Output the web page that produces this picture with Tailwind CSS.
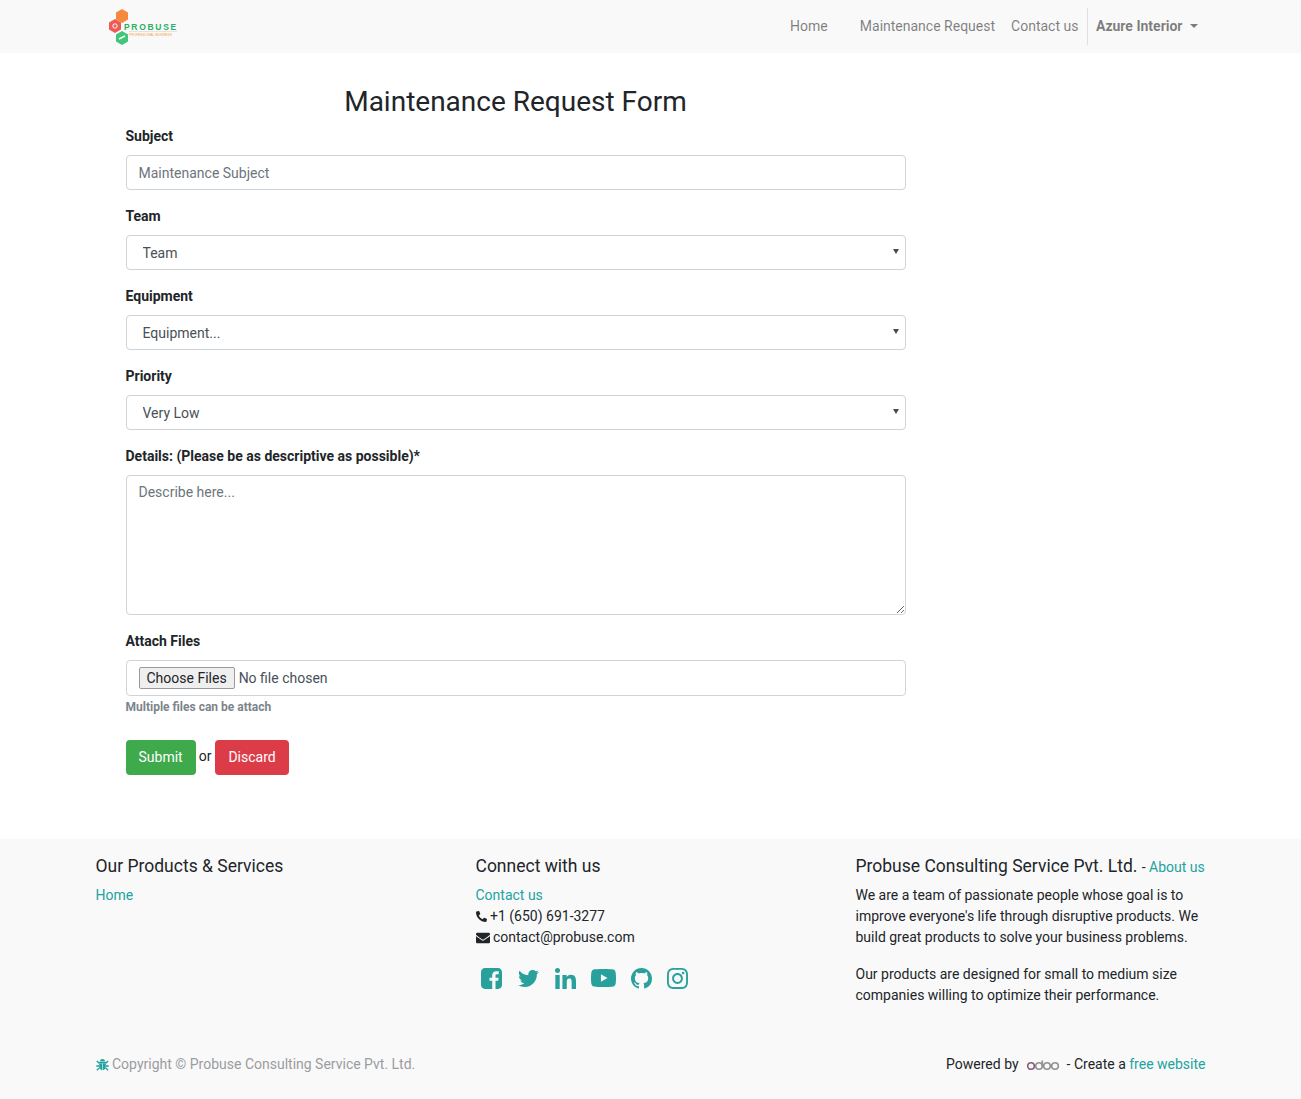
<!DOCTYPE html>
<html lang="en">
  <head>
    <meta charset="UTF-8" />
    <meta name="viewport" content="width=device-width, initial-scale=1.0" />
    <title>Maintenance Request Form</title>
    <script src="https://cdn.jsdelivr.net/npm/@tailwindcss/browser@4"></script>
  </head>
  <body class="bg-white text-[#212529] font-['Roboto',sans-serif] text-[14px] leading-[21px]">
    <header class="bg-[#f9f9f9] h-[53px]">
      <div class="w-[1110px] mx-auto h-full flex items-center justify-between">
        <svg class="ml-[12px] w-[72px] h-[38px]" viewBox="0 0 72 38">
          <polygon points="14,1 20,4.5 20,11.5 14,15 8,11.5 8,4.5" fill="#f58a3c" />
          <polygon points="7,11 13,14.5 13,21.5 7,25 1,21.5 1,14.5" fill="#ef5a55" />
          <polygon points="14,23 20,26.5 20,33.5 14,37 8,33.5 8,26.5" fill="#3fc67a" />
          <circle cx="7" cy="18" r="2.2" fill="none" stroke="#fff" stroke-width="1" />
          <path d="M11 31l6-3" stroke="#fff" stroke-width="1.5" />
          <path d="M21 23.5h48" stroke="#ddd" stroke-width="0.8" />
          <text x="16" y="22" font-family="Liberation Sans" font-weight="700" font-size="8.5" letter-spacing="1.7" fill="#2bae66">PROBUSE</text>
          <text x="21" y="27.5" font-family="Liberation Sans" font-size="3.3" fill="#f5a340">PROFESSIONAL BUSINESS</text>
        </svg>
        <nav class="flex items-center h-[37px] text-black/50">
          <a class="mr-[32px]">Home</a>
          <a class="mr-[16px]">Maintenance Request</a>
          <a class="pr-[8.5px] border-r border-black/10 h-full flex items-center">Contact us</a>
          <a class="pl-[8px] pr-[8px] flex items-center font-bold">Azure Interior<span class="ml-[7px] -mt-[1px] border-t-[4px] border-x-[4px] border-x-transparent border-t-black/50"></span></a>
        </nav>
      </div>
    </header>

    <main class="w-[1110px] mx-auto pl-[30px] pt-[32px] h-[786px]">
      <form class="w-[780px]">
        <h2 class="text-[28px] leading-[33px] text-center mb-[8px] font-normal">Maintenance Request Form</h2>
        <div class="mb-4">
          <label class="block mb-2 font-bold">Subject</label>
          <input type="text" placeholder="Maintenance Subject" class="block w-full h-[35px] px-3 pt-[1px] border border-[#ced4da] rounded-[4px] placeholder:text-[#6c757d]" />
        </div>
        <div class="mb-4">
          <label class="block mb-2 font-bold">Team</label>
          <div class="relative">
            <select class="block w-full h-[35px] pl-4 pt-[1px] border border-[#ced4da] rounded-[4px] bg-white text-[#495057] appearance-none"><option>Team</option></select>
            <span class="absolute right-[7px] top-[14px] border-t-[5px] border-x-[3px] border-x-transparent border-t-[#444b53]"></span>
          </div>
        </div>
        <div class="mb-4">
          <label class="block mb-2 font-bold">Equipment</label>
          <div class="relative">
            <select class="block w-full h-[35px] pl-4 pt-[1px] border border-[#ced4da] rounded-[4px] bg-white text-[#495057] appearance-none"><option>Equipment...</option></select>
            <span class="absolute right-[7px] top-[14px] border-t-[5px] border-x-[3px] border-x-transparent border-t-[#444b53]"></span>
          </div>
        </div>
        <div class="mb-4">
          <label class="block mb-2 font-bold">Priority</label>
          <div class="relative">
            <select class="block w-full h-[35px] pl-4 pt-[1px] border border-[#ced4da] rounded-[4px] bg-white text-[#495057] appearance-none"><option>Very Low</option></select>
            <span class="absolute right-[7px] top-[14px] border-t-[5px] border-x-[3px] border-x-transparent border-t-[#444b53]"></span>
          </div>
        </div>
        <div class="mb-4">
          <label class="block mb-2 font-bold">Details: (Please be as descriptive as possible)*</label>
          <textarea placeholder="Describe here..." class="block w-full h-[140px] px-3 py-[6px] border border-[#ced4da] rounded-[4px] placeholder:text-[#6c757d]"></textarea>
        </div>
        <div>
          <label class="block mb-2 font-bold">Attach Files</label>
          <input type="file" multiple class="block w-full h-[36px] px-3 py-[6px] border border-[#ced4da] rounded-[4px] text-[#495057] file:text-[#212529] file:bg-[#efefef] file:border file:border-[#9a9a9a] file:rounded-[2px] file:px-[7px] file:h-[22px] file:mr-1" />
          <small class="block mt-[1px] text-[12px] leading-[21px] font-bold text-[#7d848a]">Multiple files can be attach</small>
        </div>
        <div class="mt-[22px] flex items-center">
          <button type="button" class="h-[35px] px-[13px] rounded-[4px] bg-[#3eaa4c] text-white">Submit</button>
          <span class="ml-[3px] mr-[4px] -mt-[2px]">or</span>
          <button type="button" class="h-[35px] px-[13px] rounded-[4px] bg-[#dc3c48] text-white">Discard</button>
        </div>
      </form>
    </main>

    <footer class="bg-[#f9f9f9] h-[260px]">
      <div class="w-[1140px] mx-auto grid grid-cols-3 pt-[16px] h-[204px]">
        <div class="px-[15px]">
          <h5 class="text-[17.5px] leading-[22px] mb-[8px]">Our Products &amp; Services</h5>
          <a class="text-[#21a3a0]">Home</a>
        </div>
        <div class="px-[15px]">
          <h5 class="text-[17.5px] leading-[22px] mb-[8px]">Connect with us</h5>
          <a class="block text-[#21a3a0]">Contact us</a>
          <div class="flex items-center gap-[3.5px]">
            <svg class="w-[11px] h-[11px] fill-[#212529]" viewBox="0 0 512 512"><path d="M493.4 24.6l-104-24c-11.3-2.6-22.9 3.3-27.5 13.9l-48 112c-4.2 9.8-1.4 21.3 6.9 28l60.6 49.6c-36 76.7-98.9 140.5-177.2 177.2l-49.6-60.6c-6.8-8.3-18.2-11.1-28-6.9l-112 48C3.9 366.5-2 378.1.6 389.4l24 104C27.1 504.2 36.7 512 48 512c256.1 0 464-207.5 464-464 0-11.2-7.7-20.9-18.6-23.4z" transform="matrix(-1 0 0 1 512 0)" /></svg>
            <span>+1 (650) 691-3277</span>
          </div>
          <div class="flex items-center gap-[3.5px]">
            <svg class="w-[14px] h-[14px] fill-[#212529]" viewBox="0 0 512 512"><path d="M502.3 190.8c3.9-3.1 9.7-.2 9.7 4.7V400c0 26.5-21.5 48-48 48H48c-26.5 0-48-21.5-48-48V195.6c0-5 5.7-7.8 9.7-4.7 22.4 17.4 52.1 39.5 154.1 113.6 21.1 15.4 56.7 47.8 92.2 47.6 35.7.3 72-32.8 92.3-47.6 102-74.1 131.6-96.3 154-113.7zM256 320c23.2.4 56.6-29.2 73.4-41.4 132.7-96.3 142.8-104.7 173.4-128.7 5.8-4.5 9.2-11.5 9.2-18.9v-19c0-26.5-21.5-48-48-48H48C21.5 64 0 85.5 0 112v19c0 7.4 3.4 14.3 9.2 18.9 30.6 23.9 40.7 32.4 173.4 128.7 16.8 12.2 50.2 41.8 73.4 41.4z" /></svg>
            <span>contact@probuse.com</span>
          </div>
          <div class="flex items-center mt-[18px] ml-[5px] h-[24px] fill-[#28a09c]">
            <svg class="w-[21px] h-[21px]" viewBox="0 128 1536 1536"><path d="M1248 128q119 0 203.5 84.5t84.5 203.5v960q0 119-84.5 203.5t-203.5 84.5h-188v-595h199l30-232h-229v-148q0-56 23.5-84t91.5-28l122-1v-207q-63-9-178-9-136 0-217.5 80t-81.5 226v171h-200v232h200v595h-532q-119 0-203.5-84.5t-84.5-203.5v-960q0-119 84.5-203.5t203.5-84.5h960z" /></svg>
            <svg class="ml-[16px] w-[21px] h-[21px]" viewBox="0 0 512 512"><path d="M459.37 151.716c.325 4.548.325 9.097.325 13.645 0 138.72-105.583 298.558-298.558 298.558-59.452 0-114.68-17.219-161.137-47.106 8.447.974 16.568 1.299 25.34 1.299 49.055 0 94.213-16.568 130.274-44.832-46.132-.975-84.792-31.188-98.112-72.772 6.498.974 12.995 1.624 19.818 1.624 9.421 0 18.843-1.3 27.614-3.573-48.081-9.747-84.143-51.98-84.143-102.985v-1.299c13.969 7.797 30.214 12.67 47.431 13.319-28.264-18.843-46.781-51.005-46.781-87.391 0-19.492 5.197-37.36 14.294-52.954 51.655 63.675 129.3 105.258 216.365 109.807-1.624-7.797-2.599-15.918-2.599-24.04 0-57.828 46.782-104.934 104.934-104.934 30.213 0 57.502 12.67 76.67 33.137 23.715-4.548 46.456-13.32 66.599-25.34-7.798 24.366-24.366 44.833-46.132 57.827 21.117-2.273 41.584-8.122 60.426-16.243-14.292 20.791-32.161 39.308-52.628 54.253z" /></svg>
            <svg class="ml-[16px] w-[21px] h-[21px]" viewBox="0 0 448 448"><path d="M100.28 448H7.4V148.9h92.88zM53.79 108.1C24.09 108.1 0 83.5 0 53.8a53.79 53.79 0 0 1 107.58 0c0 29.7-24.1 54.3-53.79 54.3zM447.9 448h-92.68V302.4c0-34.7-.7-79.2-48.29-79.2-48.29 0-55.69 37.7-55.69 76.7V448h-92.78V148.9h89.08v40.8h1.3c12.4-23.5 42.69-48.3 87.88-48.3 94 0 111.28 61.9 111.28 142.3V448z" /></svg>
            <svg class="ml-[15px] w-[25px] h-[18px]" viewBox="15 64 546 384" preserveAspectRatio="none"><path d="M549.655 124.083c-6.281-23.65-24.787-42.276-48.284-48.597C458.781 64 288 64 288 64S117.22 64 74.629 75.486c-23.497 6.322-42.003 24.947-48.284 48.597-11.412 42.867-11.412 132.305-11.412 132.305s0 89.438 11.412 132.305c6.281 23.65 24.787 41.5 48.284 47.821C117.22 448 288 448 288 448s170.78 0 213.371-11.486c23.497-6.321 42.003-24.171 48.284-47.821 11.412-42.867 11.412-132.305 11.412-132.305s0-89.438-11.412-132.305zm-317.51 213.508V175.185l142.739 81.205-142.739 81.201z" /></svg>
            <svg class="ml-[15px] w-[21px] h-[21px]" viewBox="0 0 16 16"><path d="M8 0C3.58 0 0 3.58 0 8c0 3.54 2.29 6.53 5.47 7.59.4.07.55-.17.55-.38 0-.19-.01-.82-.01-1.49-2.01.37-2.53-.49-2.69-.94-.09-.23-.48-.94-.82-1.13-.28-.15-.68-.52-.01-.53.63-.01 1.08.58 1.23.82.72 1.21 1.87.87 2.33.66.07-.52.28-.87.51-1.07-1.78-.2-3.64-.89-3.64-3.95 0-.87.31-1.59.82-2.15-.08-.2-.36-1.02.08-2.12 0 0 .67-.21 2.2.82.64-.18 1.32-.27 2-.27.68 0 1.36.09 2 .27 1.53-1.04 2.2-.82 2.2-.82.44 1.1.16 1.92.08 2.12.51.56.82 1.27.82 2.15 0 3.07-1.87 3.75-3.65 3.95.29.25.54.73.54 1.48 0 1.07-.01 1.93-.01 2.2 0 .21.15.46.55.38A8.013 8.013 0 0016 8c0-4.42-3.58-8-8-8z" /></svg>
            <svg class="ml-[15px] w-[21px] h-[21px]" viewBox="0 32 448 448"><path d="M224.1 141c-63.6 0-114.9 51.3-114.9 114.9s51.3 114.9 114.9 114.9S339 319.5 339 255.9 287.7 141 224.1 141zm0 189.6c-41.1 0-74.7-33.5-74.7-74.7s33.5-74.7 74.7-74.7 74.7 33.5 74.7 74.7-33.6 74.7-74.7 74.7zm146.4-194.3c0 14.9-12 26.8-26.8 26.8-14.9 0-26.8-12-26.8-26.8s12-26.8 26.8-26.8 26.8 12 26.8 26.8zm76.1 27.2c-1.7-35.9-9.9-67.7-36.2-93.9-26.2-26.2-58-34.4-93.9-36.2-37-2.1-147.9-2.1-184.9 0-35.8 1.7-67.6 9.9-93.9 36.1s-34.4 58-36.2 93.9c-2.1 37-2.1 147.9 0 184.9 1.7 35.9 9.9 67.7 36.2 93.9s58 34.4 93.9 36.2c37 2.1 147.9 2.1 184.9 0 35.9-1.7 67.7-9.9 93.9-36.2 26.2-26.2 34.4-58 36.2-93.9 2.1-37 2.1-147.8 0-184.8zM398.8 388c-7.8 19.6-22.9 34.7-42.6 42.6-29.5 11.7-99.5 9-132.1 9s-102.7 2.6-132.1-9c-19.6-7.8-34.7-22.9-42.6-42.6-11.7-29.5-9-99.5-9-132.1s-2.6-102.7 9-132.1c7.8-19.6 22.9-34.7 42.6-42.6 29.5-11.7 99.5-9 132.1-9s102.7-2.6 132.1 9c19.6 7.8 34.7 22.9 42.6 42.6 11.7 29.5 9 99.5 9 132.1s2.7 102.7-9 132.1z" /></svg>
          </div>
        </div>
        <div class="px-[15px]">
          <h5 class="text-[17.5px] leading-[22px] mb-[7px]">Probuse Consulting Service Pvt. Ltd. <small class="text-[14px]">- <a class="text-[#21a3a0]">About us</a></small></h5>
          <p class="mb-4">We are a team of passionate people whose goal is to improve everyone's life through disruptive products. We build great products to solve your business problems.</p>
          <p>Our products are designed for small to medium size companies willing to optimize their performance.</p>
        </div>
      </div>
      <div class="w-[1110px] mx-auto flex justify-between items-center pt-[11px]">
        <div class="flex items-center text-[#9a9da0]">
          <svg class="w-[13px] h-[13px] mr-[3.5px] fill-[#21a3a0]" viewBox="0 0 13 13">
            <path d="M4 3.2a2.5 2.3 0 0 1 5 0zM3 3.8h7v1.4H3zM3.2 5.4h3V12.2C4.4 12 3.2 10.6 3.2 9zM6.8 5.4h3V9c0 1.6-1.2 3-3 3.2z" />
            <path d="M0.8 3l2.4 2.2M12.2 3l-2.4 2.2M0.2 8h3M12.8 8h-3M0.8 12.2l2.4-2.2M12.2 12.2l-2.4-2.2" stroke="#21a3a0" stroke-width="1.3" fill="none" />
          </svg>
          <span>Copyright © Probuse Consulting Service Pvt. Ltd.</span>
        </div>
        <div class="flex items-center">
          <span>Powered by</span>
          <svg class="mx-[7px] w-[34px] h-[12px]" viewBox="0 0 34 12" fill="none" stroke-width="1.6">
            <circle cx="5" cy="7" r="3.3" stroke="#875a7b" />
            <circle cx="13" cy="7" r="3.3" stroke="#8f8f8f" />
            <path d="M16.3 1.5V7" stroke="#8f8f8f" />
            <circle cx="21" cy="7" r="3.3" stroke="#8f8f8f" />
            <circle cx="29" cy="7" r="3.3" stroke="#8f8f8f" />
          </svg>
          <span>- Create a&nbsp;<a class="text-[#21a3a0]">free website</a></span>
        </div>
      </div>
    </footer>
  </body>
</html>
